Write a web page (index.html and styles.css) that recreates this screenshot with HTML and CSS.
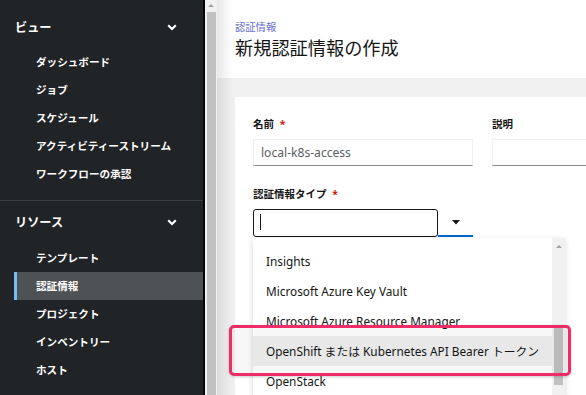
FILE: index.html
```html
<!DOCTYPE html>
<html lang="ja">

<head>
    <meta charset="utf-8">
    <meta name="viewport" content="width=device-width, initial-scale=1.0">
    <title>新規認証情報の作成</title>
    <link rel="stylesheet" href="styles.css">
</head>

<body>
    <aside class="sidebar">
        <div class="nav-group">
            <div class="nav-title">
                <span>ビュー</span>
                <svg class="chevron" width="10" height="7" viewBox="0 0 10 7"><path d="M1.2 1.3 L5 5 L8.8 1.3" fill="none" stroke="#fff" stroke-width="2.2"/></svg>
            </div>
            <ul>
                <li>ダッシュボード</li>
                <li>ジョブ</li>
                <li>スケジュール</li>
                <li>アクティビティーストリーム</li>
                <li>ワークフローの承認</li>
            </ul>
        </div>
        <div class="divider"></div>
        <div class="nav-group">
            <div class="nav-title">
                <span>リソース</span>
                <svg class="chevron" width="10" height="7" viewBox="0 0 10 7"><path d="M1.2 1.3 L5 5 L8.8 1.3" fill="none" stroke="#fff" stroke-width="2.2"/></svg>
            </div>
            <ul>
                <li>テンプレート</li>
                <li class="aktiv">認証情報</li>
                <li>プロジェクト</li>
                <li>インベントリー</li>
                <li>ホスト</li>
            </ul>
        </div>
    </aside>

    <div class="scroll">
        <div class="pil"></div>
        <div class="thumb"></div>
    </div>

    <main>
        <header>
            <p class="breadcrumb">認証情報</p>
            <h1>新規認証情報の作成</h1>
        </header>

        <section class="content">
            <div class="card">
                <div class="row">
                    <div class="field">
                        <label>名前 <span class="req">*</span></label>
                        <div class="input">local-k8s-access</div>
                    </div>
                    <div class="field">
                        <label>説明</label>
                        <div class="input"></div>
                    </div>
                </div>

                <div class="field type-field">
                    <label>認証情報タイプ <span class="req">*</span></label>
                    <div class="select">
                        <div class="select-input"><span class="cursor"></span></div>
                        <div class="toggle">
                            <svg width="8" height="5" viewBox="0 0 8 5"><path d="M0 0 H8 L4 4.5 Z" fill="#151515"/></svg>
                        </div>
                    </div>

                    <div class="menu">
                        <ul>
                            <li>Insights</li>
                            <li>Microsoft Azure Key Vault</li>
                            <li>Microsoft Azure Resource Manager</li>
                            <li class="hover">OpenShift または Kubernetes API Bearer トークン</li>
                            <li>OpenStack</li>
                        </ul>
                        <div class="menu-scroll">
                            <div class="pil"></div>
                            <div class="thumb"></div>
                        </div>
                    </div>
                </div>
            </div>
        </section>
    </main>

    <div class="markering"></div>
</body></html>
```

FILE: styles.css
```css
* {
    margin: 0;
    padding: 0;
    box-sizing: border-box;
}

body {
    display: flex;
    height: 395px;
    overflow: hidden;
    font-family: "Noto Sans", "Noto Sans CJK JP", sans-serif;
    color: #151515;
    background-color: #fff;
}

ul {
    list-style: none;
}

/* sidebar */

.sidebar {
    width: 205px;
    flex: none;
    background-color: #212427;
    border-right: 2px solid #050505;
    padding-top: 16px;
    color: #fff;
}

.nav-title {
    display: flex;
    justify-content: space-between;
    align-items: center;
    height: 22px;
    padding-left: 15px;
    padding-right: 26px;
    font-size: 12.2px;
    font-weight: 700;
}

.nav-group ul {
    margin-top: 10px;
}

.nav-group li {
    height: 28px;
    line-height: 28px;
    margin-left: 14px;
    padding-left: 19px;
    font-size: 10.6px;
    font-weight: 700;
    border-left: 3px solid transparent;
}

.nav-group li.aktiv {
    background-color: #4f5255;
    border-left-color: #73bcf7;
}

.divider {
    height: 1px;
    background-color: #3c3f42;
    margin-top: 12px;
    margin-bottom: 10px;
}

.nav-group + .divider + .nav-group ul {
    margin-top: 11px;
}

/* scrollbars */

.scroll {
    width: 12px;
    flex: none;
    background-color: #f1f1f1;
    display: flex;
    flex-direction: column;
    align-items: center;
    padding-top: 4px;
}

.pil {
    width: 0;
    height: 0;
    border-left: 3px solid transparent;
    border-right: 3px solid transparent;
    border-bottom: 3px solid #a3a3a3;
}

.thumb {
    width: 9px;
    flex: 1;
    margin-top: 5px;
    background-color: #c1c1c1;
}

/* main */

main {
    flex: 1;
    min-width: 0;
    display: flex;
    flex-direction: column;
    position: relative;
    overflow: hidden;
}

main::before {
    content: "";
    position: absolute;
    top: 0;
    bottom: 0;
    left: 0;
    width: 16px;
    background: linear-gradient(to right, rgba(0, 0, 0, 0.09), rgba(0, 0, 0, 0));
    z-index: 3;
}

header {
    flex: none;
    height: 78px;
    padding: 20px 0 0 18px;
    background-color: #fff;
}

.breadcrumb {
    font-size: 10.3px;
    line-height: 14px;
    color: #6a6fcb;
}

h1 {
    margin-top: 1px;
    font-size: 18.2px;
    line-height: 26px;
    font-weight: 400;
}

.content {
    flex: none;
    height: 340px;
    background-color: #f0f0f0;
    padding: 19px 0 0 18px;
}

.card {
    width: 460px;
    height: 320px;
    background-color: #fff;
    padding: 20px 0 0 18px;
}

.row {
    display: grid;
    grid-template-columns: 220px 220px;
    gap: 19px;
}

label {
    display: block;
    height: 14px;
    line-height: 14px;
    font-size: 10.5px;
    font-weight: 700;
}

.req {
    color: #c9190b;
    margin-left: 3px;
}

.input {
    margin-top: 8px;
    height: 27px;
    border: 1px solid #f0f0f0;
    border-bottom: 1px solid #8a8d90;
    padding-left: 7px;
    font-size: 12.1px;
    line-height: 25px;
    color: #5a5e63;
}

.type-field {
    position: relative;
    margin-top: 21px;
}

.select {
    display: flex;
    margin-top: 8px;
    width: 220px;
    height: 28px;
}

.select-input {
    width: 185px;
    border: 1.5px solid #151515;
    border-radius: 3px;
    padding: 4px 0 0 6px;
}

.cursor {
    display: block;
    width: 1px;
    height: 16px;
    background-color: #151515;
}

.toggle {
    flex: 1;
    display: flex;
    align-items: center;
    justify-content: center;
    border-bottom: 2px solid #06c;
}

/* dropdown */

.menu {
    position: absolute;
    top: 51px;
    left: 0;
    width: 312px;
    height: 160px;
    display: flex;
    background-color: #fff;
    box-shadow: 0 2px 6px rgba(3, 3, 3, 0.16);
    z-index: 2;
}

.menu ul {
    flex: 1;
    padding-top: 8px;
}

.menu li {
    height: 30px;
    line-height: 30px;
    padding-left: 13px;
    font-size: 11.8px;
    white-space: nowrap;
}

.menu li.hover {
    background-color: #f0f0f0;
}

.menu-scroll {
    width: 13px;
    background-color: #f1f1f1;
    display: flex;
    flex-direction: column;
    align-items: center;
    padding-top: 7px;
}

.menu-scroll .thumb {
    flex: none;
    height: 59px;
    margin-top: 78px;
}

/* annotation */

.markering {
    position: absolute;
    left: 229px;
    top: 325px;
    width: 342px;
    height: 51px;
    border: 3px solid #ee2c67;
    border-radius: 5px;
    background-color: rgba(0, 0, 0, 0.03);
    box-shadow: 0 1px 3px rgba(0, 0, 0, 0.2);
    z-index: 5;
}
```
